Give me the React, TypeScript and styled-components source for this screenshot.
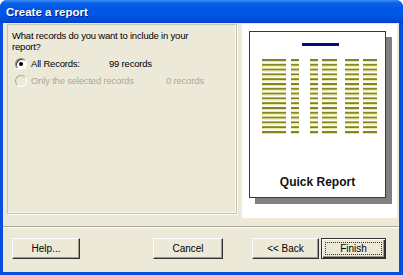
import styled, { createGlobalStyle } from "styled-components";

const GlobalStyle = createGlobalStyle`
  html, body {
    margin: 0;
    padding: 0;
    background: #ffffff;
  }
  body {
    font-family: "Liberation Sans", Arial, sans-serif;
    font-size: 9.5px;
    letter-spacing: -0.2px;
    color: #000;
  }
`;

const ROWS = Array.from({ length: 16 }, (_, i) => i);
const COLUMNS = [
  { x: 12, w: 24 },
  { x: 41, w: 8 },
  { x: 60, w: 8 },
  { x: 72, w: 15 },
  { x: 95, w: 14 },
  { x: 113, w: 14 },
];

export default function App() {
  return (
    <>
      <GlobalStyle />
      <Window>
        <TitleBar>Create a report</TitleBar>
        <Body>
          <Content>
            <OptionsPanel>
              <Question>
                What records do you want to include in your
                <br />
                report?
              </Question>
              <OptionRow>
                <Radio checked />
                <OptionLabel $w={78}>All Records:</OptionLabel>
                <span>99 records</span>
              </OptionRow>
              <OptionRow $disabled>
                <Radio $disabled />
                <OptionLabel $w={135}>Only the selected records</OptionLabel>
                <span>0 records</span>
              </OptionRow>
            </OptionsPanel>
            <PreviewPanel>
              <Page>
                <svg width="135" height="104" viewBox="0 0 135 104">
                  <rect x="52" y="11" width="37" height="3" fill="#0a0a80" />
                  {ROWS.map((r) =>
                    COLUMNS.map((c) => (
                      <g key={`${r}-${c.x}`}>
                        <rect
                          x={c.x}
                          y={27 + r * 4.8}
                          width={c.w}
                          height="2"
                          fill="#85851c"
                        />
                        <rect
                          x={c.x}
                          y={29 + r * 4.8}
                          width={c.w}
                          height="1"
                          fill="#e6e69a"
                        />
                      </g>
                    ))
                  )}
                </svg>
                <PageTitle>Quick Report</PageTitle>
              </Page>
            </PreviewPanel>
          </Content>
          <Divider />
          <ButtonRow>
            <Button $w={68}>Help...</Button>
            <ButtonGroup>
              <Button $w={70}>Cancel</Button>
              <Button $w={67}>&lt;&lt; Back</Button>
              <DefaultButton $w={65}>
                <FocusRing>Finish</FocusRing>
              </DefaultButton>
            </ButtonGroup>
          </ButtonRow>
        </Body>
      </Window>
    </>
  );
}

const Window = styled.div`
  width: 403px;
  height: 275px;
  box-sizing: border-box;
  display: flex;
  flex-direction: column;
  background: #0a4fe0;
  border-radius: 7px 7px 0 0;
  overflow: hidden;
  padding: 0 4px 3px 3px;
`;

const TitleBar = styled.div`
  height: 23px;
  flex: none;
  margin: 0 -4px 0 -3px;
  padding-left: 6px;
  display: flex;
  align-items: center;
  color: #fff;
  font-weight: bold;
  font-size: 11.5px;
  letter-spacing: 0;
  text-shadow: 1px 1px 0 #0a1e8c;
  background: linear-gradient(
    #3d8ff5 0,
    #0a62ec 3px,
    #0058e6 8px,
    #0055e4 16px,
    #0048d8 21px,
    #0040cc 23px
  );
`;

const Body = styled.div`
  flex: 1;
  display: flex;
  flex-direction: column;
  background: #ece9d8;
  padding: 1px 0 0 4px;
`;

const Content = styled.div`
  display: flex;
  height: 194px;
  gap: 5px;
`;

const OptionsPanel = styled.div`
  width: 230px;
  height: 190px;
  box-sizing: border-box;
  border: 1px solid #c7c3b3;
  box-shadow: inset -1px -1px 0 #fbfaf5, 1px 1px 0 #fbfaf5;
  padding: 5px 4px;
  display: flex;
  flex-direction: column;
`;

const Question = styled.div`
  line-height: 11px;
  margin-bottom: 3px;
`;

const OptionRow = styled.div<{ $disabled?: boolean }>`
  display: flex;
  align-items: center;
  height: 17px;
  padding-left: 3px;
  color: ${({ $disabled }) => ($disabled ? "#aca899" : "#000")};
`;

const Radio = styled.span<{ checked?: boolean; $disabled?: boolean }>`
  position: relative;
  flex: none;
  width: 12px;
  height: 12px;
  box-sizing: border-box;
  border-radius: 50%;
  border: 1px solid;
  border-color: ${({ $disabled }) =>
    $disabled ? "#aca899 #fff #fff #aca899" : "#808080 #fff #fff #808080"};
  background: ${({ $disabled }) => ($disabled ? "#ece9d8" : "#fff")};
  box-shadow: ${({ $disabled }) =>
    $disabled ? "none" : "inset 1px 1px 0 #404040"};
  margin-right: 4px;
  &::after {
    content: "";
    display: ${({ checked }) => (checked ? "block" : "none")};
    position: absolute;
    left: 3px;
    top: 3px;
    width: 4px;
    height: 4px;
    border-radius: 50%;
    background: #000;
  }
`;

const OptionLabel = styled.span<{ $w: number }>`
  width: ${({ $w }) => $w}px;
  flex: none;
`;

const PreviewPanel = styled.div`
  width: 155px;
  background: #fff;
  padding: 7px 0 0 7px;
  box-sizing: border-box;
`;

const Page = styled.div`
  width: 137px;
  height: 167px;
  box-sizing: border-box;
  border: 1px solid #3a3a3a;
  background: #fff;
  box-shadow: 6px 6px 0 #808080;
  display: flex;
  flex-direction: column;
  align-items: center;
`;

const PageTitle = styled.div`
  margin-top: auto;
  margin-bottom: 8px;
  font-size: 12px;
  font-weight: bold;
  letter-spacing: 0;
  color: #111;
`;

const Divider = styled.div`
  margin-top: 8px;
  margin-left: -4px;
  height: 0;
  border-top: 1px solid #aca899;
  border-bottom: 1px solid #fff;
`;

const ButtonRow = styled.div`
  display: flex;
  justify-content: space-between;
  padding: 10px 13px 0 5px;
`;

const ButtonGroup = styled.div`
  display: flex;
  & > :first-child {
    margin-right: 29px;
  }
  & > :nth-child(2) {
    margin-right: 2px;
  }
`;

const Button = styled.button<{ $w: number }>`
  width: ${({ $w }) => $w}px;
  height: 21px;
  box-sizing: border-box;
  padding: 0;
  font-family: "Liberation Sans", Arial, sans-serif;
  font-size: 10px;
  color: #000;
  background: #ece9d8;
  border: 1px solid;
  border-color: #fff #303030 #303030 #fff;
  box-shadow: inset -1px -1px 0 #9d9a8a;
`;

const DefaultButton = styled(Button)`
  border-color: #303030;
  box-shadow: inset 1px 1px 0 #fff, inset -1px -1px 0 #303030,
    inset -2px -2px 0 #9d9a8a;
  padding: 3px;
`;

const FocusRing = styled.span`
  display: flex;
  align-items: center;
  justify-content: center;
  height: 100%;
  border: 1px dotted #333;
  box-sizing: border-box;
`;
